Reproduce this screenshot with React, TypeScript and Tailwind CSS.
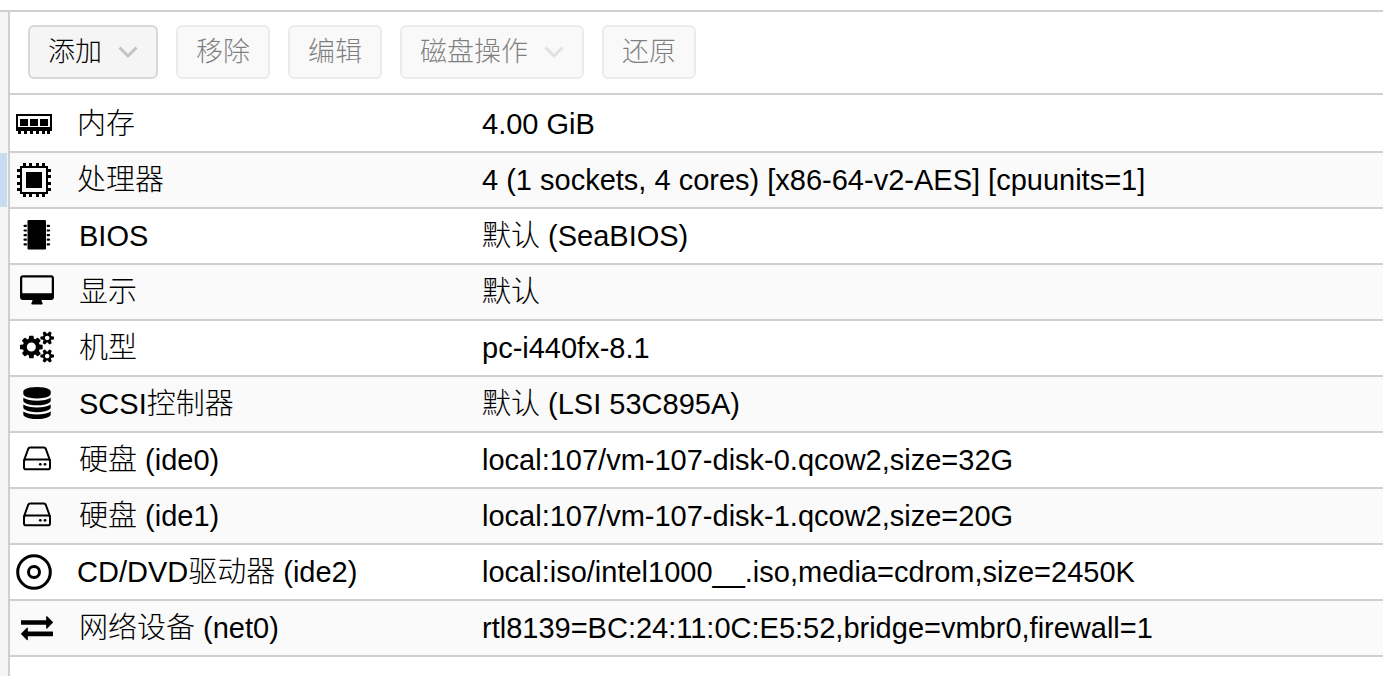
import React from "react";

const MemoryIcon: React.FC = () => (
    <svg width="36" height="20" viewBox="0 0 36 20" fill="currentColor" aria-hidden="true">
        <path fillRule="evenodd" d="M0 0h36v17H0zM2 2v11h32V2z" />
        <path d="M4 5h8v7H4zM14 5h8v7h-8zM24 5h8v7h-8z" />
        <path d="M2 17h3v3H2zM8 17h3v3H8zM14 17h3v3h-3zM20 17h3v3h-3zM26 17h3v3h-3zM31 17h3v3h-3z" />
    </svg>
);

const CpuIcon: React.FC = () => (
    <svg width="36" height="34" viewBox="0 0 36 34" fill="currentColor" aria-hidden="true">
        <path fillRule="evenodd" d="M4 3h28v28H4zM6 5v24h24V5z" />
        <path d="M10 9h16v16H10z" />
        <path d="M7 0h3v4H7zM13 0h3v4h-3zM20 0h3v4h-3zM26 0h3v4h-3zM7 30h3v4H7zM13 30h3v4h-3zM20 30h3v4h-3zM26 30h3v4h-3z" />
        <path d="M1 6h4v3H1zM1 12h4v3H1zM1 19h4v3H1zM1 25h4v3H1zM31 6h4v3h-4zM31 12h4v3h-4zM31 19h4v3h-4zM31 25h4v3h-4z" />
    </svg>
);

const ChipIcon: React.FC = () => (
    <svg width="28" height="32" viewBox="0 0 28 32" fill="currentColor" aria-hidden="true">
        <rect x="4.5" y="1" width="18.5" height="29.5" rx="1.2" />
        <path d="M1.500 5.800h2.300v2.200H1.500l-1-.5v-1.200zM1.500 10.400h2.300v2.200H1.500l-1-.5v-1.200zM1.500 15h2.300v2.200H1.500l-1-.5v-1.200zM1.500 19.600h2.300v2.200H1.500l-1-.5v-1.200zM1.500 24.200h2.300v2.200H1.500l-1-.5v-1.200z" />
        <path d="M26.100 5.800h-2.300v2.200h2.300l1-.5v-1.200zM26.100 10.400h-2.300v2.200h2.300l1-.5v-1.200zM26.100 15h-2.300v2.200h2.300l1-.5v-1.200zM26.100 19.600h-2.300v2.200h2.300l1-.5v-1.200zM26.100 24.200h-2.300v2.200h2.300l1-.5v-1.200z" />
    </svg>
);

const DesktopIcon: React.FC = () => (
    <svg width="34" height="32" viewBox="-64 0 1920 1792" fill="currentColor" aria-hidden="true">
        <path d="M1728 992v-832q0-13-9.5-22.5t-22.5-9.5h-1600q-13 0-22.5 9.5t-9.5 22.5v832q0 13 9.5 22.5t22.5 9.5h1600q13 0 22.5-9.5t9.5-22.5zm128-832v1088q0 66-47 113t-113 47h-544q0 37 16 77.5t32 71 16 43.5q0 26-19 45t-45 19h-512q-26 0-45-19t-19-45q0-14 16-44t32-70 16-78h-544q-66 0-113-47t-47-113v-1088q0-66 47-113t113-47h1600q66 0 113 47t47 113z" />
    </svg>
);

const CogsIcon: React.FC = () => (
    <svg width="34" height="32" viewBox="-64 0 1920 1792" fill="currentColor" aria-hidden="true">
        <path d="M832 896q0-106-75-181t-181-75-181 75-75 181 75 181 181 75 181-75 75-181zm768 512q0-52-38-90t-90-38-90 38-38 90q0 53 37.5 90.5t90.5 37.5 90.5-37.5 37.5-90.5zm0-1024q0-52-38-90t-90-38-90 38-38 90q0 53 37.5 90.5t90.5 37.5 90.5-37.5 37.5-90.5zm-384 421v185q0 10-7 19.5t-16 10.5l-155 24q-11 35-32 76 34 48 90 115 7 11 7 20 0 12-7 19-23 30-82.5 89.5t-78.5 59.5q-11 0-21-7l-115-90q-37 19-77 31-11 108-23 155-7 24-30 24h-186q-11 0-20-7.5t-10-17.5l-23-153q-34-10-75-31l-118 89q-7 7-20 7-11 0-21-8-144-133-144-160 0-9 7-19 10-14 41-53t47-61q-23-44-35-82l-152-24q-10-1-17-9.5t-7-19.5v-185q0-10 7-19.5t16-10.5l155-24q11-35 32-76-34-48-90-115-7-11-7-20 0-12 7-20 22-30 82-89t79-59q11 0 21 7l115 90q34-18 77-32 11-108 23-154 7-24 30-24h186q11 0 20 7.5t10 17.5l23 153q34 10 75 31l118-89q8-7 20-7 11 0 21 8 144 133 144 160 0 8-7 19-12 16-42 54t-45 60q23 48 34 82l152 23q10 2 17 10.5t7 19.5zm640 533v140q0 16-149 31-12 27-30 52 51 113 51 138 0 4-4 7-122 71-124 71-8 0-46-47t-52-68q-20 2-30 2t-30-2q-14 21-52 68t-46 47q-2 0-124-71-4-3-4-7 0-25 51-138-18-25-30-52-149-15-149-31v-140q0-16 149-31 13-29 30-52-51-113-51-138 0-4 4-7 4-2 35-20t59-34 30-16q8 0 46 46.5t52 67.5q20-2 30-2t30 2q51-71 92-112l6-2q4 0 124 70 4 3 4 7 0 25-51 138 17 23 30 52 149 15 149 31zm0-1024v140q0 16-149 31-12 27-30 52 51 113 51 138 0 4-4 7-122 71-124 71-8 0-46-47t-52-68q-20 2-30 2t-30-2q-14 21-52 68t-46 47q-2 0-124-71-4-3-4-7 0-25 51-138-18-25-30-52-149-15-149-31v-140q0-16 149-31 13-29 30-52-51-113-51-138 0-4 4-7 4-2 35-20t59-34 30-16q8 0 46 46.5t52 67.5q20-2 30-2t30 2q51-71 92-112l6-2q4 0 124 70 4 3 4 7 0 25-51 138 17 23 30 52 149 15 149 31z" />
    </svg>
);

const DatabaseIcon: React.FC = () => (
    <svg width="32" height="32" viewBox="0 0 1792 1792" fill="currentColor" aria-hidden="true">
        <path d="M896 768q237 0 443-43t325-127v170q0 69-103 128t-280 93.5-385 34.5-385-34.5-280-93.5-103-128v-170q119 84 325 127t443 43zm0 768q237 0 443-43t325-127v170q0 69-103 128t-280 93.5-385 34.5-385-34.5-280-93.5-103-128v-170q119 84 325 127t443 43zm0-384q237 0 443-43t325-127v170q0 69-103 128t-280 93.5-385 34.5-385-34.5-280-93.5-103-128v-170q119 84 325 127t443 43zm0-1152q208 0 385 34.5t280 93.5 103 128v128q0 69-103 128t-280 93.5-385 34.5-385-34.5-280-93.5-103-128v-128q0-69 103-128t280-93.5 385-34.5z" />
    </svg>
);

const DiskIcon: React.FC = () => (
    <svg width="28" height="32" viewBox="0 0 28 32" fill="none" stroke="currentColor" strokeWidth="2" aria-hidden="true">
        <path d="M1 17.500l4.200-11.700q.5-1.300 1.900-1.300h13.800q1.400 0 1.900 1.300L27 17.500" />
        <rect x="1" y="16.500" width="26" height="9.700" rx="1.800" />
        <circle cx="17.300" cy="21.300" r="1.400" fill="currentColor" stroke="none" />
        <circle cx="22" cy="21.300" r="1.400" fill="currentColor" stroke="none" />
    </svg>
);

const DiscIcon: React.FC = () => (
    <svg width="36" height="36" viewBox="0 0 36 36" fill="none" stroke="currentColor" strokeWidth="3" aria-hidden="true">
        <circle cx="18" cy="18" r="16.300" />
        <circle cx="18" cy="18" r="5.500" />
    </svg>
);

const ExchangeIcon: React.FC = () => (
    <svg width="32" height="32" viewBox="0 0 1792 1792" fill="currentColor" aria-hidden="true">
        <path d="M1792 1184v192q0 13-9.5 22.5t-22.5 9.5h-1376v192q0 13-9.5 22.5t-22.5 9.5q-12 0-24-10l-319-320q-9-9-9-22 0-14 9-23l320-320q9-9 23-9 13 0 22.5 9.5t9.5 22.5v192h1376q13 0 22.5 9.5t9.5 22.5zm0-544q0 14-9 23l-320 320q-9 9-23 9-13 0-22.5-9.5t-9.5-22.5v-192h-1376q-13 0-22.5-9.5t-9.5-22.5v-192q0-13 9.5-22.5t22.5-9.5h1376v-192q0-14 9-23t23-9q12 0 24 10l319 319q9 9 9 23z" />
    </svg>
);

const ChevronIcon: React.FC = () => (
    <svg width="20" height="14" viewBox="0 0 20 14" fill="none" stroke="#c4c4c4" strokeWidth="3" aria-hidden="true">
        <path d="M1.500 2.500L10 11l8.500-8.500" />
    </svg>
);

const buttons = [
    { text: "添加", menu: true, disabled: false },
    { text: "移除", menu: false, disabled: true },
    { text: "编辑", menu: false, disabled: true },
    { text: "磁盘操作", menu: true, disabled: true },
    { text: "还原", menu: false, disabled: true },
];

// wide: full-size icons that fill the slot, the others sit centred in it
const rows = [
    { icon: MemoryIcon, wide: true, label: "内存", value: "4.00 GiB" },
    { icon: CpuIcon, wide: true, label: "处理器", value: "4 (1 sockets, 4 cores) [x86-64-v2-AES] [cpuunits=1]" },
    { icon: ChipIcon, wide: false, label: "BIOS", value: "默认 (SeaBIOS)" },
    { icon: DesktopIcon, wide: false, label: "显示", value: "默认" },
    { icon: CogsIcon, wide: false, label: "机型", value: "pc-i440fx-8.1" },
    { icon: DatabaseIcon, wide: false, label: "SCSI控制器", value: "默认 (LSI 53C895A)" },
    { icon: DiskIcon, wide: false, label: "硬盘 (ide0)", value: "local:107/vm-107-disk-0.qcow2,size=32G" },
    { icon: DiskIcon, wide: false, label: "硬盘 (ide1)", value: "local:107/vm-107-disk-1.qcow2,size=20G" },
    { icon: DiscIcon, wide: true, label: "CD/DVD驱动器 (ide2)", value: "local:iso/intel1000__.iso,media=cdrom,size=2450K" },
    { icon: ExchangeIcon, wide: false, label: "网络设备 (net0)", value: "rtl8139=BC:24:11:0C:E5:52,bridge=vmbr0,firewall=1" },
];

const Toolbar: React.FC = () => {
    return (
        <div className="flex flex-wrap gap-[18px] border-b-2 border-[#cfcfcf] px-[18px] pt-[13px] pb-[14px]">
            {buttons.map((button) => (
                <button
                    key={button.text}
                    type="button"
                    disabled={button.disabled}
                    className="flex h-[54px] items-center gap-4 rounded-md border-2 border-[#d8d8d8] bg-[#f5f5f5] px-[18px] text-[27px] leading-[36px] disabled:opacity-50"
                >
                    {button.text}
                    {button.menu && <ChevronIcon />}
                </button>
            ))}
        </div>
    )
}

const HardwareTable: React.FC = () => {
    return (
        <table className="mt-px w-full table-fixed border-collapse text-left text-[29px] leading-[36px]">
            <colgroup>
                <col className="w-[460px]" />
                <col />
            </colgroup>
            <tbody>
                {rows.map((row) => (
                    <tr key={row.label} className="h-14 border-b-2 border-[#cfcfcf] even:bg-[#fafafa]">
                        <th scope="row" className="p-0 pl-[6px] font-light">
                            <div className="flex items-center">
                                {row.wide ? (
                                    <span className="flex w-[61px] shrink-0"><row.icon /></span>
                                ) : (
                                    <span className="mr-[21px] flex w-[42px] shrink-0 justify-center pb-[3px]"><row.icon /></span>
                                )}
                                {row.label}
                            </div>
                        </th>
                        <td className="p-0 pl-3">{row.value}</td>
                    </tr>
                ))}
            </tbody>
        </table>
    )
}

const App: React.FC = () => {
    return (
        <div className="flex min-h-screen flex-col bg-white font-['Liberation_Sans','Noto_Sans_CJK_SC',sans-serif] font-light text-black">
            <div className="h-3 border-b-2 border-[#cfcfcf]"></div>
            <div className="flex grow">
                <aside className="w-[10px] shrink-0 border-r-2 border-[#cfcfcf] bg-[#f5f5f5] pt-[141px]">
                    <div className="mr-px h-[54px] bg-[#c8dbf0]"></div>
                </aside>
                <main className="min-w-0 grow">
                    <Toolbar />
                    <HardwareTable />
                </main>
            </div>
        </div>
    )
}

export default App;
